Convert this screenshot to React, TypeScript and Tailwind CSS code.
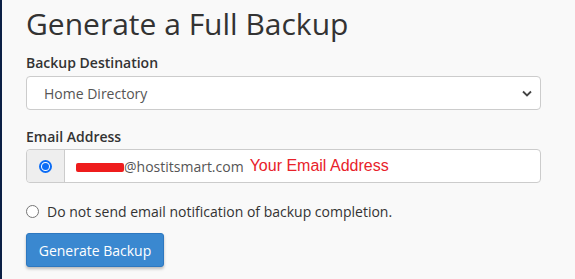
import React from 'react';

export default function App() {
  return (
    <div className="flex h-[279px] w-[575px] overflow-hidden bg-[#f9f9f9] font-['Open_Sans',sans-serif] text-[#333]">
      <div className="w-[2px] shrink-0 bg-[#0b1f45]" />
      <div className="w-[539px] pl-[24px] pt-[4px]">
        <h1 className="text-[30px] leading-[40px] text-[#333]">Generate a Full Backup</h1>

        <div className="mt-[9px] text-[14px] font-semibold leading-[20px]">Backup Destination</div>
        <div className="relative mt-[3px] flex h-[34px] items-center rounded-[4px] border border-[#ccc] bg-white pl-[17px] text-[14px] text-[#555]">
          Home Directory
          <svg className="absolute right-[8px] top-[13px]" width="10" height="7" viewBox="0 0 10 7">
            <path d="M1 1.5 L5 5.5 L9 1.5" fill="none" stroke="#444" strokeWidth="1.8" />
          </svg>
        </div>

        <div className="mt-[17px] text-[14px] font-semibold leading-[20px]">Email Address</div>
        <div className="mt-[2px] flex h-[34px] rounded-[4px] border border-[#ccc] bg-white">
          <div className="flex w-[38px] items-center justify-center rounded-l-[4px] border-r border-[#ccc] bg-[#eee]">
            <span className="flex h-[13px] w-[13px] items-center justify-center rounded-full border-2 border-[#0b6cf5] bg-white">
              <span className="h-[7px] w-[7px] rounded-full bg-[#0b6cf5]" />
            </span>
          </div>
          <div className="flex items-center pl-[11px] text-[14px] text-[#555]">
            <span className="mt-[3px] h-[9px] w-[48px] rounded-[2px] bg-[#ee1c1c]" />
            <span>@hostitsmart.com</span>
            <span className="ml-[6px] font-['Liberation_Sans',sans-serif] text-[16px] text-[#e8222a]">Your Email Address</span>
          </div>
        </div>

        <label className="mt-[18px] flex items-center text-[14px] text-[#333]">
          <span className="h-[13px] w-[13px] rounded-full border border-[#767676] bg-white" />
          <span className="ml-[8px]">Do not send email notification of backup completion.</span>
        </label>

        <button className="mt-[11px] h-[34px] w-[138px] rounded-[3px] border border-[#2e78c0] bg-[#3a88d0] text-[14px] text-white shadow-[0_2px_3px_rgba(0,0,0,0.25)]">
          Generate Backup
        </button>
      </div>
    </div>
  );
}
